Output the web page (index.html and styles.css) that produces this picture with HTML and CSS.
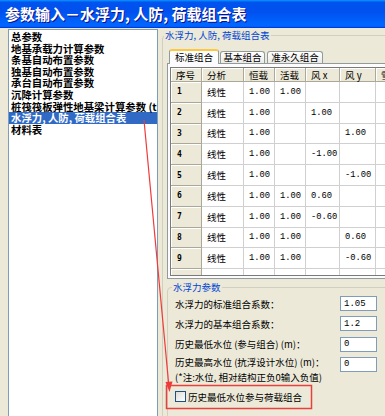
FILE: index.html
```html
<!DOCTYPE html>
<html lang="zh">
<head>
  <meta charset="UTF-8" />
  <meta name="viewport" content="width=device-width, initial-scale=1.0"/>
  <title>参数输入－水浮力, 人防, 荷载组合表</title>
  <link rel="stylesheet" href="styles.css">
</head>
<body>
  <div class="window">
    <div class="titlebar">参数输入－水浮力, 人防, 荷载组合表</div>

    <div class="client">
      <!-- Parameter list -->
      <ul class="tree">
        <li>总参数</li>
        <li>地基承载力计算参数</li>
        <li>条基自动布置参数</li>
        <li>独基自动布置参数</li>
        <li>承台自动布置参数</li>
        <li>沉降计算参数</li>
        <li>桩筏筏板弹性地基梁计算参数 (tm)</li>
        <li class="selected">水浮力, 人防, 荷载组合表</li>
        <li>材料表</li>
      </ul>

      <!-- Load combination group -->
      <fieldset class="group">
        <legend>水浮力, 人防, 荷载组合表</legend>

        <div class="tabs">
          <span class="tab active">标准组合</span>
          <span class="tab tab-basic">基本组合</span>
          <span class="tab tab-quasi">准永久组合</span>
        </div>

        <div class="tabpage">
          <div class="grid">
            <div class="hd">序号</div>
            <div class="hd">分析</div>
            <div class="hd">恒载</div>
            <div class="hd">活载</div>
            <div class="hd">风 x</div>
            <div class="hd">风 y</div>
            <div class="hd">雪</div>

            <div class="rh">1</div><div class="cell">线性</div><div class="cell num">1.00</div><div class="cell num">1.00</div><div class="cell num"></div><div class="cell num"></div><div class="cell"></div>
            <div class="rh">2</div><div class="cell">线性</div><div class="cell num">1.00</div><div class="cell num"></div><div class="cell num">1.00</div><div class="cell num"></div><div class="cell"></div>
            <div class="rh">3</div><div class="cell">线性</div><div class="cell num">1.00</div><div class="cell num"></div><div class="cell num"></div><div class="cell num">1.00</div><div class="cell"></div>
            <div class="rh">4</div><div class="cell">线性</div><div class="cell num">1.00</div><div class="cell num"></div><div class="cell num">-1.00</div><div class="cell num"></div><div class="cell"></div>
            <div class="rh">5</div><div class="cell">线性</div><div class="cell num">1.00</div><div class="cell num"></div><div class="cell num"></div><div class="cell num">-1.00</div><div class="cell"></div>
            <div class="rh">6</div><div class="cell">线性</div><div class="cell num">1.00</div><div class="cell num">1.00</div><div class="cell num">0.60</div><div class="cell num"></div><div class="cell"></div>
            <div class="rh">7</div><div class="cell">线性</div><div class="cell num">1.00</div><div class="cell num">1.00</div><div class="cell num">-0.60</div><div class="cell num"></div><div class="cell"></div>
            <div class="rh">8</div><div class="cell">线性</div><div class="cell num">1.00</div><div class="cell num">1.00</div><div class="cell num"></div><div class="cell num">0.60</div><div class="cell"></div>
            <div class="rh">9</div><div class="cell">线性</div><div class="cell num">1.00</div><div class="cell num">1.00</div><div class="cell num"></div><div class="cell num">-0.60</div><div class="cell"></div>
            <div class="rh"></div><div class="cell"></div><div class="cell"></div><div class="cell"></div><div class="cell"></div><div class="cell"></div><div class="cell"></div>
          </div>
        </div>

        <!-- Water buoyancy parameters -->
        <fieldset class="water">
          <legend>水浮力参数</legend>
          <div class="field">
            <label>水浮力的标准组合系数：</label>
            <input type="text" value="1.05">
          </div>
          <div class="field">
            <label>水浮力的基本组合系数：</label>
            <input type="text" value="1.2">
          </div>
          <div class="field">
            <label>历史最低水位 (参与组合) (m)：</label>
            <input type="text" value="0">
          </div>
          <div class="field field-tall">
            <label>历史最高水位 (抗浮设计水位) (m)：<br>(*注:水位, 相对结构正负0输入负值)</label>
            <input type="text" value="0">
          </div>
          <div class="check">
            <span class="checkbox"></span>
            <span>历史最低水位参与荷载组合</span>
          </div>
        </fieldset>
      </fieldset>
    </div>

    <!-- red annotation drawn over the dialog -->
    <svg class="annot" width="385" height="416" viewBox="0 0 385 416">
      <line x1="144" y1="120" x2="168.6" y2="383" stroke="#f03a3a" stroke-width="1.2"/>
      <polygon points="169.5,392 165.5,382 172.5,381.5" fill="#f03a3a"/>
      <rect x="166.5" y="385.5" width="145" height="23" fill="none" stroke="#e8403c" stroke-width="1.5"/>
    </svg>
  </div>
</body>
</html>
```

FILE: styles.css
```css
* {
  box-sizing: border-box;
}
body {
  margin: 0;
  background: #ece9d8;
  font-family: "Noto Sans CJK SC", "Noto Sans", sans-serif;
  font-size: 9.5px;
  color: #000;
  overflow: hidden;
}
.window {
  position: relative;
  width: 385px;
  height: 416px;
  overflow: hidden;
}
.titlebar {
  height: 28px;
  padding-left: 5px;
  line-height: 28px;
  color: #fff;
  font-size: 15px;
  font-weight: bold;
  white-space: nowrap;
  text-shadow: 1px 1px 0 #0f1089;
  background: linear-gradient(180deg, #0997ff, #0053ee 8%, #0050ee 40%, #06f 88%, #06f 93%, #005bff 95%, #003dd7 96%, #003dd7);
}
.client {
  display: flex;
  align-items: flex-start;
}

/* list on the left */
.tree {
  flex: none;
  list-style: none;
  width: 150px;
  height: 400px;
  margin: 1px 0 0 8px;
  padding: 1px 0 0 0;
  overflow: hidden;
  background: #fff;
  border: 1px solid #7f9db9;
  font-size: 10.4px;
  font-weight: bold;
  line-height: 11.6px;
}
.tree li {
  padding-left: 2px;
  white-space: nowrap;
}
.tree .selected {
  background: #316ac5;
  color: #fff;
}

/* group boxes */
.group {
  flex: none;
  width: 250px;
  height: 420px;
  min-width: 0;
  margin: 1px 0 0 4px;
  padding: 8px 0 0 4px;
  border: 1px solid #d0d0bf;
  border-radius: 4px;
}
.group > legend,
.water > legend {
  padding: 0 1px;
  margin-left: -3px;
  line-height: 12px;
  color: #0046d5;
}

/* tabs */
.tabs {
  position: relative;
  z-index: 1;
  display: flex;
  align-items: flex-end;
  height: 14px;
  margin-left: 2px;
}
.tab {
  height: 12px;
  line-height: 11px;
  text-align: center;
  border: 1px solid #919b9c;
  border-bottom: none;
  border-radius: 3px 3px 0 0;
  background: linear-gradient(#fff, #ecebe6);
}
.tab.active {
  width: 50px;
  height: 15px;
  line-height: 12px;
  margin-bottom: -1px;
  background: #fcfcfe;
  border-top: 2px solid #ffc83c;
}
.tab-basic {
  width: 45px;
  margin-left: 1px;
}
.tab-quasi {
  width: 56px;
  margin-left: 2px;
}
.tabpage {
  height: 216px;
  padding: 3px 0 2px 2px;
  border: 1px solid #919b9c;
  background: #fcfcfe;
}

/* table */
.grid {
  display: grid;
  grid-template-columns: 31px 42px 31px 31px 34px 36px 60px;
  grid-template-rows: 14px;
  grid-auto-rows: 20.8px;
  height: 209px;
  overflow: hidden;
  background: #fff;
  border: 1px solid #7a7a7a;
  border-right: none;
}
.grid > div {
  display: flex;
  align-items: center;
  padding-left: 5px;
  white-space: nowrap;
  border-right: 1px solid #d0d0d0;
  border-bottom: 1px solid #d0d0d0;
}
.grid .hd,
.grid .rh {
  background: #ece9d8;
  border-right-color: #aca899;
  border-bottom-color: #aca899;
  box-shadow: inset 1px 1px 0 #fff;
}
.grid .rh {
  font-family: "DejaVu Sans Mono", monospace;
  font-size: 8px;
  font-weight: bold;
  padding-left: 6px;
}
.grid .num {
  font-family: "Liberation Mono", monospace;
  font-size: 8.8px;
}

/* water parameters */
.water {
  width: 240px;
  height: 150px;
  margin: 2px 0 0 0;
  padding: 3px 0 0 7px;
  border: 1px solid #d0d0bf;
  border-radius: 4px;
}
.field {
  display: flex;
  align-items: center;
  height: 15px;
  margin-bottom: 5.3px;
}
.field label {
  width: 165px;
  flex: none;
  white-space: nowrap;
}
.field input {
  width: 37px;
  height: 15px;
  margin: 0;
  padding: 0 0 0 3px;
  border: 1px solid #7f9db9;
  background: #fff;
  font-family: "Liberation Mono", monospace;
  font-size: 9px;
}
.field-tall {
  align-items: flex-start;
  height: auto;
}
.field-tall label {
  margin-top: -2px;
  line-height: 15px;
}
.check {
  display: flex;
  align-items: center;
  gap: 2px;
  height: 13px;
  margin-top: 5px;
}
.checkbox {
  width: 11px;
  height: 11px;
  border: 1px solid #1c5180;
  background: linear-gradient(135deg, #dcdcd7, #fff);
}

.annot {
  position: absolute;
  left: 0;
  top: 0;
  pointer-events: none;
}
```
